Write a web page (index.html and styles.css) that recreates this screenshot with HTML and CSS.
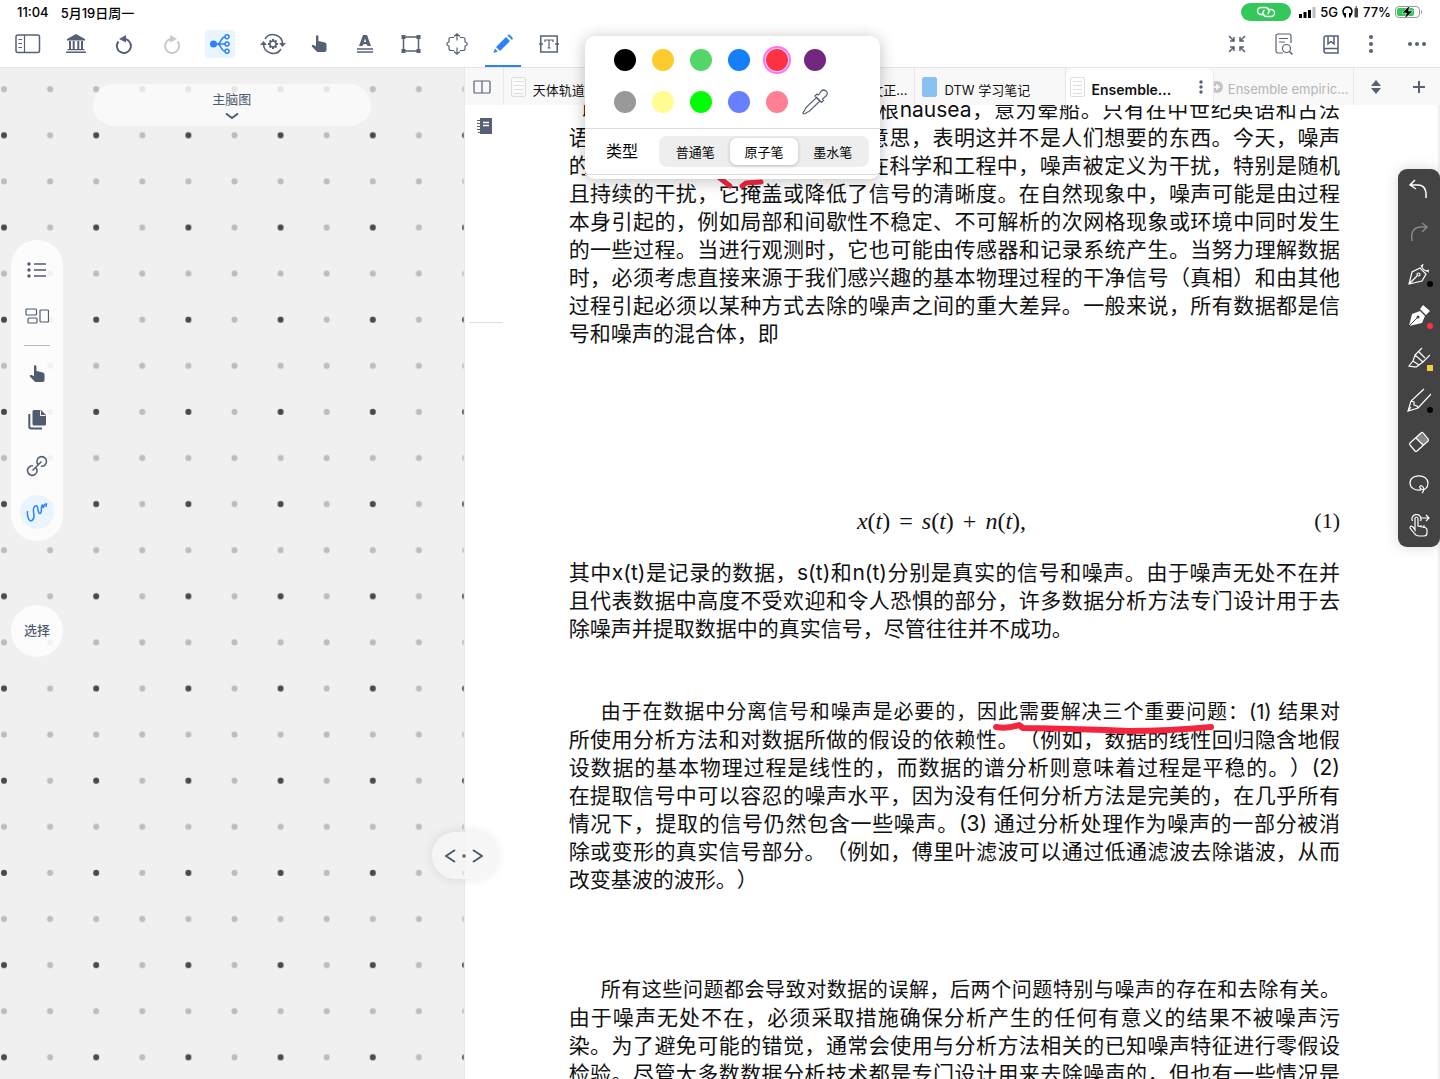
FILE: index.html
```html
<!DOCTYPE html>
<html lang="zh-CN">
<head>
    <meta charset="UTF-8">
    <meta name="viewport" content="width=device-width, initial-scale=1.0">
    <title>Ensemble</title>
    <link rel="stylesheet" href="styles.css">
</head>
<body>
    <header class="header">
        <div class="statusbar">
            <span>11:04</span>
            <span class="date">5月19日周一</span>
            <div class="status-right">
                <span class="hotspot">
                    <svg width="20" height="12" viewBox="0 0 20 12"><g fill="none" stroke="#fff" stroke-width="1.5" stroke-linecap="round"><path d="M8 8.500H5a3.500 3.500 0 0 1 0-7h4.500a3.500 3.500 0 0 1 2.500 6"/><path d="M12 3.500h3a3.500 3.500 0 0 1 0 7h-4.500a3.500 3.500 0 0 1-2.500-6"/></g></svg>
                </span>
                <svg class="signal" width="17" height="11" viewBox="0 0 17 11"><path d="M0 7h3v4H0zM4.500 5h3v6h-3zM9 3h3v8H9z"/><path d="M13.500 0h3v11h-3z" fill="#bbb"/></svg>
                <span>5G</span>
                <svg class="phones" width="17" height="12" viewBox="0 0 17 12"><path d="M3 10C-1 5 2 1 5.500 1S12 5 8 10" fill="none" stroke="#000" stroke-width="1.500"/><path d="M1.500 7h2.500v4.500H2.500zM9.500 7H7v4.500h1.500z"/><rect x="12.500" y="2" width="3.500" height="9.500" rx="1" fill="#444"/><path d="M13.500.5h1.500v1h-1.500z"/></svg>
                <span>77%</span>
                <svg class="battery" width="28" height="14" viewBox="0 0 28 14"><rect x=".5" y="1.500" width="24" height="11" rx="3.500" fill="#fff" stroke="#999"/><rect x="2" y="3" width="17" height="8" rx="2" fill="#34c759"/><path d="M26 5c1.500.5 1.500 3.500 0 4z" fill="#999"/><path d="M15 0 7 8h4.500l-2 6L18 6h-4.500z" stroke="#fff" stroke-width=".6"/></svg>
            </div>
        </div>
        <nav class="toolbar">
            <div class="group main-group">
                <button aria-label="Sidebar"><svg width="26" height="20" viewBox="0 0 26 20"><rect x="1" y="1" width="23.500" height="17.500" rx="2" class="line"/><path d="M9.500 1v17.500M3.500 5.500h3.500M3.500 9.500h3.500M3.500 13.500h3.500" class="line thin"/></svg></button>
                <button aria-label="Library"><svg width="20" height="20" viewBox="0 0 20 20"><path d="M10 0 19 5v1.500H1V5zM3 7h2v8H3zM6.700 7h2v8h-2zM11.300 7h2v8h-2zM15 7h2v8h-2zM1.500 15h17v1.200h-17zM0 17.500h20V19H0z"/></svg></button>
                <button aria-label="Undo"><svg width="18" height="19" viewBox="0 0 18 19"><path d="M3.500 6.500A7 7 0 1 0 9 4" class="line bold"/><path d="m4 4 7-4v7.500z"/></svg></button>
                <button aria-label="Redo" class="off"><svg width="18" height="19" viewBox="0 0 18 19"><path d="M9 4a7 7 0 1 0 5.500 2.500" class="line bold"/><path d="M14 4 7 0v7.500z"/></svg></button>
                <button aria-label="Mind map" class="map"><svg width="20" height="20" viewBox="0 0 20 20"><circle cx="3.500" cy="10" r="3.500"/><g class="line"><path d="M6 10h9M15 3C10 3 12 10 7 10c5 0 3 7 8 7"/><circle cx="17" cy="2.800" r="2"/><circle cx="17" cy="10" r="2"/><circle cx="17" cy="17.200" r="2"/></g></svg></button>
            </div>
            <div class="group">
                <button aria-label="Review"><svg width="26" height="22" viewBox="0 0 26 22"><g class="line"><path d="M5 6a9.500 9.500 0 0 1 17.500 5M21 16a9.500 9.500 0 0 1-17.500-5"/><circle cx="13" cy="11" r="3"/><path d="M13 6v2M13 14v2M8 11h2M16 11h2M9.500 7.500l1.500 1.500M15 13l1.500 1.500M9.500 14.500 11 13M15 9l1.500-1.500" stroke-width="2"/></g><path d="m0 12 3.500-4L7 12zM19 10l3.500 4 3.500-4z"/></svg></button>
                <button aria-label="Hand"><svg width="16" height="18" viewBox="0 0 16 18"><path d="M5 1.500a1.200 1.200 0 0 1 2.400 0V6L14 7.500a2 2 0 0 1 1.500 2V15q0 2-2 2H7q-1 0-1.800-1L.8 11.500C.5 10 2 9.800 3 10.200l2 1z"/></svg></button>
                <button aria-label="Text style"><svg width="16" height="18" viewBox="0 0 16 18"><path d="M6 0h4l4 11h-3.500l-.6-1.800H6.100L5.500 11H2zM8 3.500 6.900 7h2.200zM0 13.200h16v1.500H0zM0 16.300h16v1.500H0z" fill-rule="evenodd"/></svg></button>
                <button aria-label="Area"><svg width="20" height="18" viewBox="0 0 20 18"><path d="M2.500 2h15v14h-15z" class="line"/><path d="M.5 0h4v4h-4zM15.500 0h4v4h-4zM.5 14h4v4h-4zM15.500 14h4v4h-4z"/></svg></button>
                <button aria-label="Stretch"><svg width="22" height="22" viewBox="0 0 22 22"><path d="M8 4.500H5q-2 0-2 2V9l-2 1v2l2 1v2.500q0 2 2 2h3M14 4.500h3q2 0 2 2V9l2 1v2l-2 1v2.500q0 2-2 2h-3M11 1v6.500M8 3.500 11 .8l3 2.700M11 14.500V21M8 18.500l3 2.700 3-2.700" class="line thin"/></svg></button>
                <button aria-label="Pen" class="pen"><svg width="20" height="20" viewBox="0 0 20 20"><path d="m13 3 4 4L7 17l-4-4zM14.500 1.500q1.500-2 3 0l1.500 1.500q1.500 1.500 0 3zM1.800 14.500l3 3L.5 19z"/></svg></button>
                <button aria-label="Text box"><svg width="20" height="18" viewBox="0 0 20 18"><path d="M1.800 7V1h16.400v6M1.800 11v6h16.400v-6M1.800 7v4M18.200 7v4M0 9h4M16 9h4" class="line"/><path d="M6 7V5h8v2M10 5v8M8.500 13h3" class="line thin"/></svg></button>
            </div>
            <div class="group right-group">
                <button aria-label="Collapse"><svg width="18" height="18" viewBox="0 0 18 18"><path d="M1 1l5 5M6 2v4H2M17 1l-5 5M12 2v4h4M1 17l5-5M6 16v-4H2M17 17l-5-5M12 16v-4h4" class="line"/></svg></button>
                <button aria-label="Search"><svg width="20" height="22" viewBox="0 0 20 22"><path d="M9 20H4a2 2 0 0 1-2-2V3a2 2 0 0 1 2-2h11a2 2 0 0 1 2 2v7M5 5.500h9M5 9h6" class="line thin"/><circle cx="12.500" cy="15.500" r="4" class="line thin"/><path d="m15.500 18.500 3 3" class="line"/></svg></button>
                <button aria-label="Bookmark"><svg width="16" height="19" viewBox="0 0 16 19"><path d="M3 1h12v17H3q-2 0-2-2V3q0-2 2-2zM1 15q0-1.500 2-1.500h12M5 1v8l3-2.500L11 9V1" class="line"/></svg></button>
                <button aria-label="Options" class="slim"><svg width="6" height="20" viewBox="0 0 6 20"><circle cx="3" cy="3" r="2"/><circle cx="3" cy="10" r="2"/><circle cx="3" cy="17" r="2"/></svg></button>
                <button aria-label="More" class="last"><svg width="20" height="6" viewBox="0 0 20 6"><circle cx="3" cy="3" r="2"/><circle cx="10" cy="3" r="2"/><circle cx="17" cy="3" r="2"/></svg></button>
            </div>
        </nav>
    </header>

    <main class="workspace">
        <section class="mindmap">
            <svg class="dots" width="100%" height="100%">
                <defs>
                    <pattern id="grid" width="92.200" height="92.200" patternUnits="userSpaceOnUse">
                        <circle cx="4" cy="21.200" r="3" fill="#bdbdbd"/>
                        <circle cx="50.100" cy="21.200" r="3" fill="#bdbdbd"/>
                        <circle cx="4" cy="67.300" r="3" fill="#4a4a4a"/>
                        <circle cx="50.100" cy="67.300" r="3" fill="#bdbdbd"/>
                    </pattern>
                </defs>
                <rect width="100%" height="100%" fill="url(#grid)"/>
            </svg>
            <button class="map-title">
                主脑图
                <svg width="14" height="8" viewBox="0 0 14 8"><path d="m1 1.500 6 4.500 6-4.500" class="line bold"/></svg>
            </button>
            <div class="side-tools">
                <button aria-label="Outline"><svg width="20" height="16" viewBox="0 0 20 16"><circle cx="2" cy="2" r="1.700"/><circle cx="2" cy="8" r="1.700"/><circle cx="2" cy="14" r="1.700"/><path d="M7 2h12M7 8h12M7 14h12" class="line"/></svg></button>
                <button aria-label="Cards"><svg width="24" height="16" viewBox="0 0 24 16"><g class="line thin"><rect x="1" y="1" width="10.500" height="6" rx="1"/><rect x="3" y="10" width="9" height="5" rx="1"/><rect x="15" y="2" width="8.500" height="12" rx="1"/></g></svg></button>
                <hr>
                <button aria-label="Hand"><svg width="16" height="18" viewBox="0 0 16 18"><path d="M5 1.500a1.200 1.200 0 0 1 2.400 0V6L14 7.500a2 2 0 0 1 1.500 2V15q0 2-2 2H7q-1 0-1.800-1L.8 11.500C.5 10 2 9.800 3 10.200l2 1z"/></svg></button>
                <button aria-label="Copy"><svg width="18" height="20" viewBox="0 0 18 20"><path d="M6 0h7l5 5v9q0 1.500-1.500 1.500H6q-1.500 0-1.500-1.500V1.500Q4.500 0 6 0z"/><path d="M12.500.5v5h5" fill="none" stroke="#fff"/><path d="M1.300 4v12.500q0 2 2 2H14" class="line bold"/></svg></button>
                <button aria-label="Link"><svg width="22" height="22" viewBox="0 0 22 22"><g class="line"><path d="M12 9.500A4.800 4.800 0 1 1 15 11.200M10 12.500A4.800 4.800 0 1 1 7 10.800M6.500 15.500l9-9"/></g></svg></button>
                <button aria-label="Scribble" class="scribble"><span><svg width="22" height="20" viewBox="0 0 22 20"><path d="M1.500 9C1 15 3 20 6 18.500c5-2.500-1-10.500 2.500-14C13 .5 11 12 14 11.500c3-.5 0-8 2.500-8.500l1 3c0-2 1-4.500 3-4l-.5 3" class="line"/></svg></span></button>
            </div>
            <button class="select">选择</button>
        </section>

        <section class="reader">
            <div class="tabs">
                <button class="split" aria-label="Split view"><svg width="18" height="14" viewBox="0 0 18 14"><rect x="1" y="1" width="16" height="12" rx="1" class="line thin"/><path d="M9 1v12" class="line thin"/></svg></button>
                <button class="tab wide"><i class="thumb"></i><span>天体轨道参</span></button>
                <button class="tab wide tail"><span>文正...</span></button>
                <button class="tab"><i class="thumb blue"></i><span>DTW 学习笔记</span></button>
                <button class="tab active"><i class="thumb"></i><span>Ensemble...</span><svg width="4" height="14" viewBox="0 0 4 14"><circle cx="2" cy="2" r="1.700"/><circle cx="2" cy="7" r="1.700"/><circle cx="2" cy="12" r="1.700"/></svg></button>
                <button class="tab next"><svg width="12" height="12" viewBox="0 0 12 12"><circle cx="6" cy="6" r="6" fill="#c4c4c4"/><path d="M6 3v6M3 6h6" stroke="#fff" stroke-width="1.500"/></svg><span>Ensemble empiric...</span></button>
                <div class="tab-actions">
                    <button aria-label="Sort"><svg width="10" height="14" viewBox="0 0 10 14"><path d="m5 0 5 6H0zM5 14 0 8h10z"/></svg></button>
                    <button aria-label="New tab"><svg width="14" height="14" viewBox="0 0 14 14"><path d="M7 1v12M1 7h12" class="line bold"/></svg></button>
                </div>
            </div>
            <div class="page">
                <button class="notebook" aria-label="Notebook"><svg width="16" height="16" viewBox="0 0 16 16"><path d="M3 0h12v16H3zM0 2h3v1H0zM0 5h3v1H0zM0 8h3v1H0zM0 11h3v1H0zM1 14h2v1H1z"/><path d="M6 4.500h6M6 7.500h6" stroke="#fff" stroke-width="1.500"/></svg></button>
                <hr class="tick">
                <article>
                    <svg class="ink" width="100%" height="100%">
                        <path d="m148 80 13 10M173 90l4-3 15-1" stroke-width="5"/>
                        <path d="M427 631q12 2 23-2l4 3q60 1 106 3 40 0 82-4" stroke-width="6"/>
                    </svg>
                    <p>
                        <span class="covered first"><span>以</span><span class="rest">根nausea，意为晕船。只有在中世纪英语和古法</span></span>
                        <span class="covered"><span>语</span><span class="rest">意思，表明这并不是人们想要的东西。今天，噪声</span></span>
                        <span class="covered"><span>的</span><span class="rest">在科学和工程中，噪声被定义为干扰，特别是随机</span></span>
                        <span class="row">且持续的干扰，它掩盖或降低了信号的清晰度。在自然现象中，噪声可能是由过程</span>
                        <span class="row">本身引起的，例如局部和间歇性不稳定、不可解析的次网格现象或环境中同时发生</span>
                        <span class="row">的一些过程。当进行观测时，它也可能由传感器和记录系统产生。当努力理解数据</span>
                        <span class="row">时，必须考虑直接来源于我们感兴趣的基本物理过程的干净信号（真相）和由其他</span>
                        <span class="row">过程引起必须以某种方式去除的噪声之间的重大差异。一般来说，所有数据都是信</span>
                        <span class="row end">号和噪声的混合体，即</span>
                    </p>
                    <div class="formula">
                        <span class="math"><i>x</i>(<i>t</i>) <span class="op">=</span> <i>s</i>(<i>t</i>) <span class="op">+</span> <i>n</i>(<i>t</i>),</span>
                        <span>(1)</span>
                    </div>
                    <p>
                        <span class="row">其中x(t)是记录的数据，s(t)和n(t)分别是真实的信号和噪声。由于噪声无处不在并</span>
                        <span class="row">且代表数据中高度不受欢迎和令人恐惧的部分，许多数据分析方法专门设计用于去</span>
                        <span class="row end">除噪声并提取数据中的真实信号，尽管往往并不成功。</span>
                    </p>
                    <p class="problems">
                        <span class="row indent">由于在数据中分离信号和噪声是必要的，因此需要解决三个重要问题：(1) 结果对</span>
                        <span class="row">所使用分析方法和对数据所做的假设的依赖性。（例如，数据的线性回归隐含地假</span>
                        <span class="row">设数据的基本物理过程是线性的，而数据的谱分析则意味着过程是平稳的。）(2)</span>
                        <span class="row">在提取信号中可以容忍的噪声水平，因为没有任何分析方法是完美的，在几乎所有</span>
                        <span class="row">情况下，提取的信号仍然包含一些噪声。(3) 通过分析处理作为噪声的一部分被消</span>
                        <span class="row">除或变形的真实信号部分。（例如，傅里叶滤波可以通过低通滤波去除谐波，从而</span>
                        <span class="row end">改变基波的波形。）</span>
                    </p>
                    <p class="noise">
                        <span class="row indent">所有这些问题都会导致对数据的误解，后两个问题特别与噪声的存在和去除有关。</span>
                        <span class="row">由于噪声无处不在，必须采取措施确保分析产生的任何有意义的结果不被噪声污</span>
                        <span class="row">染。为了避免可能的错觉，通常会使用与分析方法相关的已知噪声特征进行零假设</span>
                        <span class="row">检验。尽管大多数数据分析技术都是专门设计用来去除噪声的，但也有一些情况是</span>
                    </p>
                </article>
            </div>
            <button class="handle" aria-label="Resize"><svg width="38" height="14" viewBox="0 0 38 14"><path d="M10 1 1 7l9 6M28 1l9 6-9 6" class="line bold"/><circle cx="19" cy="7" r="1.700"/></svg></button>
        </section>
    </main>

    <!-- Pen colour and type -->
    <div class="popover">
        <div class="swatches">
            <button class="black" aria-label="Black"></button>
            <button class="yellow" aria-label="Yellow"></button>
            <button class="green" aria-label="Green"></button>
            <button class="blue" aria-label="Blue"></button>
            <button class="red" aria-label="Red"></button>
            <button class="purple" aria-label="Purple"></button>
            <button class="gray" aria-label="Gray"></button>
            <button class="lemon" aria-label="Lemon"></button>
            <button class="lime" aria-label="Lime"></button>
            <button class="indigo" aria-label="Indigo"></button>
            <button class="pink" aria-label="Pink"></button>
            <button class="picker" aria-label="Pick colour"><svg width="26" height="26" viewBox="0 0 26 26"><g class="line thin"><path d="m14.500 8.500 3.500 3.500L7 22.500q-2 .5-3.500 2Q1 25.500 1 23.500 3 22 3.500 19z"/><path d="m13 7 2-2 1.500 1 3-4q2-2 4.500 0t0 5l-3.500 3 1 1.500-2 2z"/></g></svg></button>
        </div>
        <div class="pen-type">
            <span>类型</span>
            <div class="segments">
                <label><input type="radio" name="pen">普通笔</label>
                <label><input type="radio" name="pen" checked>原子笔</label>
                <label><input type="radio" name="pen">墨水笔</label>
            </div>
        </div>
    </div>

    <div class="pen-tools">
        <button aria-label="Undo"><svg width="22" height="22" viewBox="0 0 22 22"><path d="M7 1 2 6l6 4M2 6h8q9 0 8 13" class="line"/></svg></button>
        <button aria-label="Redo" class="dim"><svg width="22" height="22" viewBox="0 0 22 22"><path d="m14 2 5 4-5 5M19 6h-7Q2 7 4 20" class="line"/></svg></button>
        <button aria-label="Fountain pen"><svg width="22" height="22" viewBox="0 0 22 22"><path d="m1 21 3-12 8-4 6 6-4 7zM1 21l8-8M13 2q1 5 8 7M14 4l1-3M18 8l3-1" class="line thin"/><circle cx="10.500" cy="11.500" r="1.500" class="line thin"/></svg><i class="ink-black"></i></button>
        <button aria-label="Ballpoint pen"><svg width="22" height="22" viewBox="0 0 22 22"><path d="m1 21 3-12 8-3 5 5-3 7zM12 4l3-4 7 6-4 4z" fill="#fff"/><path d="m1 21 8-8" stroke="#434343"/><circle cx="10" cy="12" r="1.500" fill="#434343"/></svg><i class="ink-red"></i></button>
        <button aria-label="Highlighter"><svg width="22" height="22" viewBox="0 0 22 22"><path d="m1 19 4-5 6 4-3 2zM5 14l2-6 8 7-4 3M7 8l7-7M15 15l7-7M11 5l6 6" class="line thin"/></svg><i class="ink-yellow"></i></button>
        <button aria-label="Pencil"><svg width="24" height="24" viewBox="0 0 24 24"><path d="m17 1-13 12-3 10 10-3L24 6M4 13l3 1v3l3 1 1 2M1 23l3-4" class="line thin"/></svg><i class="ink-black"></i></button>
        <button aria-label="Eraser"><svg width="22" height="22" viewBox="0 0 22 22"><path d="m13 2 7 7-5 5-7-7z" fill="#888"/><path d="M13 2q1-1 2 0l5 6q1 1 0 2L9 20q-1 1-2 0l-5-6q-1-1 0-2zM8 7l7 7" class="line thin"/></svg></button>
        <button aria-label="Lasso"><svg width="22" height="22" viewBox="0 0 22 22"><path d="M13 17c-7 1-11-3-11-7 0-10 18-9 18 0 0 5-4 8-7 6s0-5 2-2q2 3-1 6" class="line thin"/></svg></button>
        <button aria-label="Gesture"><svg width="22" height="24" viewBox="0 0 22 24"><path d="M7 16V5q0-2 1.500-2T10 5v7l7 1.500q2 .5 2 2.500v3q0 3-3 3h-5q-3 0-5-3l-4-5q0-3 3-1zM13 11v2M16 11v3" class="line thin"/><path d="M4.500 7a4.500 4.500 0 1 1 8 0M12 4h9M18 1l3 3-3 3" class="line thin"/></svg></button>
    </div>
</body>
</html>
```
FILE: styles.css
```css
* {
    box-sizing: border-box;
}
body {
    margin: 0;
    height: 100vh;
    display: flex;
    flex-direction: column;
    overflow: hidden;
    background: #fff;
    color: #111;
    font-family: Inter, "Noto Sans CJK SC", sans-serif;
    font-size: 13px;
}
button {
    border: 0;
    padding: 0;
    background: none;
    color: inherit;
    font: inherit;
    display: flex;
    align-items: center;
    justify-content: center;
}
svg {
    display: block;
    flex: none;
}
button svg {
    fill: currentColor;
}
svg .line {
    fill: none;
    stroke: currentColor;
    stroke-width: 1.5;
}
svg .thin {
    stroke-width: 1.2;
}
svg .bold {
    stroke-width: 2;
}

/* Header */
.header {
    height: 68px;
    border-bottom: 1px solid #e4e4e4;
}
.statusbar {
    height: 24px;
    padding: 0 17px;
    display: flex;
    align-items: center;
    color: #000;
    font-weight: 500;
}
.date {
    margin-left: 12px;
}
.status-right {
    margin-left: auto;
    display: flex;
    align-items: center;
    gap: 4px;
}
.hotspot {
    width: 50px;
    height: 18px;
    margin-right: 4px;
    border-radius: 9px;
    background: #34c759;
    display: flex;
    align-items: center;
    justify-content: center;
}
.toolbar {
    height: 43px;
    padding-left: 4px;
    display: flex;
    color: #566176;
}
.group {
    display: flex;
}
.group button {
    width: 46px;
    height: 40px;
}
.main-group {
    margin-right: 6px;
}
.main-group button {
    width: 48px;
}
.toolbar .off {
    color: #c8cacc;
}
.toolbar .map {
    width: 30px;
    height: 28px;
    margin: 6px 9px;
    border-radius: 4px;
    background: #eaf4ff;
    color: #2b83fb;
}
.toolbar .pen {
    width: 36px;
    height: 43px;
    margin: 0 5px;
    padding-bottom: 1px;
    border-bottom: 2px solid #2b83fb;
    color: #2b83fb;
}
.right-group {
    margin-left: auto;
}
.right-group button {
    width: 47px;
}
.right-group .slim {
    width: 34px;
}
.right-group .last {
    width: 46px;
    margin-left: 6px;
}

/* Mind map */
.workspace {
    flex: 1;
    min-height: 0;
    display: flex;
}
.mindmap {
    flex: 464;
    position: relative;
    background: #f0f0f0;
    color: #4f5b70;
}
.dots {
    position: absolute;
}
.map-title {
    position: absolute;
    top: 16px;
    left: 20%;
    right: 20%;
    height: 42px;
    border-radius: 21px;
    background: rgba(255, 255, 255, 0.6);
    flex-direction: column;
    gap: 5px;
    line-height: 16px;
}
.side-tools {
    position: absolute;
    top: 172px;
    left: 11px;
    width: 52px;
    padding: 7px 0 6px;
    border-radius: 26px;
    background: rgba(255, 255, 255, 0.8);
}
.side-tools button {
    width: 100%;
    height: 46px;
}
.side-tools hr {
    width: 26px;
    height: 1px;
    margin: 6px auto 5px;
    border: 0;
    background: #b5b9c0;
}
.scribble {
    color: #2b83fb;
}
.scribble span {
    width: 34px;
    height: 34px;
    border-radius: 50%;
    background: #eaf4ff;
    display: flex;
    align-items: center;
    justify-content: center;
}
.select {
    position: absolute;
    top: 537px;
    left: 11px;
    width: 52px;
    height: 52px;
    padding-bottom: 3px;
    border-radius: 50%;
    background: rgba(255, 255, 255, 0.8);
    font-weight: 500;
}

/* Reader */
.reader {
    flex: 976;
    min-width: 0;
    position: relative;
    display: flex;
    flex-direction: column;
    border-left: 1px solid #e8e8e8;
}
.tabs {
    height: 37px;
    display: flex;
    background: #f8f8f8;
    position: relative;
    z-index: 1;
    color: #566176;
}
.split {
    width: 39px;
    padding-right: 3px;
    border-right: 1px solid #e8e8e8;
}
.tab {
    flex: 150;
    min-width: 0;
    padding: 0 7px;
    gap: 7px;
    justify-content: flex-start;
    border-right: 1px solid #e8e8e8;
    white-space: nowrap;
    overflow: hidden;
}
.tab span {
    padding-top: 5px;
    color: #111;
}
.tab.wide {
    flex: 212;
}
.tab.tail {
    justify-content: flex-end;
}
.tab.active {
    flex: 148;
    padding: 0 10px 0 4px;
    border-radius: 8px 8px 0 0;
    background: #fff;
}
.active span {
    font-size: 14px;
    font-weight: 600;
}
.active svg {
    margin-left: auto;
}
.tab.next {
    flex: 139;
    gap: 5px;
}
.next svg {
    margin-left: -10px;
}
.next span {
    color: #b5b5b5;
}
.thumb {
    width: 15px;
    height: 20px;
    border: 1px solid #ddd;
    border-radius: 2px;
    background: repeating-linear-gradient(#fff 0 3px, #ddd 3px 4px);
    background-clip: content-box;
    padding: 2px;
    flex: none;
}
.thumb.blue {
    border-color: #8bc0f2;
    background: #8bc0f2;
}
.tab-actions {
    display: flex;
}
.tab-actions button {
    width: 43px;
}
.page {
    flex: 1;
    min-height: 0;
    overflow: hidden;
    position: relative;
    padding: 0 98px 0 104px;
    border-right: 2px solid #f0f0f0;
}
.notebook {
    position: absolute;
    top: 13px;
    left: 12px;
    color: #566176;
}
.tick {
    position: absolute;
    top: 217px;
    left: 4px;
    width: 34px;
    margin: 0;
    border: 0;
    border-top: 1px solid #ddd;
}
article {
    position: relative;
    margin-top: -9px;
    font-size: 21px;
    line-height: 28px;
    white-space: nowrap;
    text-spacing-trim: space-all;
}
article p {
    margin: 0;
}
.ink {
    position: absolute;
    top: 0;
    left: 0;
    fill: none;
    stroke: #f5253f;
    stroke-linecap: round;
    stroke-linejoin: round;
}
.row {
    display: block;
    text-align-last: justify;
}
.row.end {
    text-align-last: left;
}
.indent {
    padding-left: 32px;
    font-size: 20px;
}
.covered {
    display: flex;
    justify-content: space-between;
}
.covered.first {
    padding-left: 12px;
}
.rest {
    width: 472px;
    text-align-last: justify;
}
.first .rest {
    width: 462px;
}
.formula {
    display: flex;
    align-items: center;
    margin: 159px 0 24px;
    font-family: "Liberation Serif", serif;
    font-size: 22px;
}
.math {
    flex: 1;
    text-align: center;
    font-size: 24px;
}
.op {
    padding: 0 3px;
}
.problems {
    padding-top: 55px;
}
.noise {
    padding-top: 82px;
}
.handle {
    position: absolute;
    top: 764px;
    left: -33px;
    z-index: 2;
    width: 65px;
    height: 47px;
    border-radius: 24px;
    background: rgba(246, 246, 246, 0.85);
    box-shadow: 0 0 12px rgba(0, 0, 0, 0.1);
    color: #4f5b70;
}

/* Popover */
.popover {
    position: absolute;
    top: 36px;
    left: 585px;
    z-index: 3;
    width: 295px;
    height: 143px;
    border-radius: 10px;
    background: #fff;
    box-shadow: 0 2px 16px rgba(0, 0, 0, 0.25);
}
.swatches {
    height: 92px;
    padding: 13px 29px;
    display: grid;
    grid-template-columns: repeat(6, 22px);
    grid-auto-rows: 22px;
    gap: 20px 16px;
}
.swatches button {
    border-radius: 50%;
}
.black {
    background: #000;
}
.yellow {
    background: #fecb2f;
}
.green {
    background: #53d769;
}
.blue {
    background: #147efb;
}
.red {
    background: #fc3142;
    box-shadow: 0 0 0 1px #ffd5f5, 0 0 0 3px #fc74f4;
}
.purple {
    background: #73267f;
}
.gray {
    background: #999;
}
.lemon {
    background: #fffc91;
}
.lime {
    background: #00ff04;
}
.indigo {
    background: #6680ff;
}
.pink {
    background: #ff8095;
}
.picker {
    color: #566176;
}
.pen-type {
    height: 47px;
    padding: 0 11px 0 21px;
    display: flex;
    align-items: center;
    justify-content: space-between;
    border-top: 1px solid #ddd;
    border-bottom: 1px solid #ddd;
    color: #000;
    font-size: 16px;
}
.pen-type > span {
    padding-bottom: 3px;
}
.segments {
    width: 210px;
    height: 31px;
    padding: 2px;
    display: flex;
    border-radius: 8px;
    background: #eee;
    font-size: 13px;
}
.segments label {
    flex: 1;
    padding-bottom: 1px;
    border-radius: 7px;
    display: flex;
    align-items: center;
    justify-content: center;
}
.segments label:has(:checked) {
    background: #fff;
    box-shadow: 0 1px 4px rgba(0, 0, 0, 0.2);
}
.segments input {
    appearance: none;
    position: absolute;
    margin: 0;
}

/* Pen tools */
.pen-tools {
    position: absolute;
    top: 169px;
    right: 0;
    z-index: 3;
    width: 42px;
    border-radius: 9px;
    background: #434343;
    box-shadow: 0 0 14px rgba(0, 0, 0, 0.15);
    color: #fff;
}
.pen-tools button {
    position: relative;
    width: 42px;
    height: 42px;
}
.pen-tools .dim {
    color: #888;
}
.pen-tools i {
    position: absolute;
    right: 7px;
    bottom: 8px;
    width: 6px;
    height: 6px;
    border-radius: 50%;
}
.ink-black {
    background: #000;
}
.ink-red {
    background: #fc3142;
}
.pen-tools .ink-yellow {
    border-radius: 0;
    background: #fecb2f;
}
```
